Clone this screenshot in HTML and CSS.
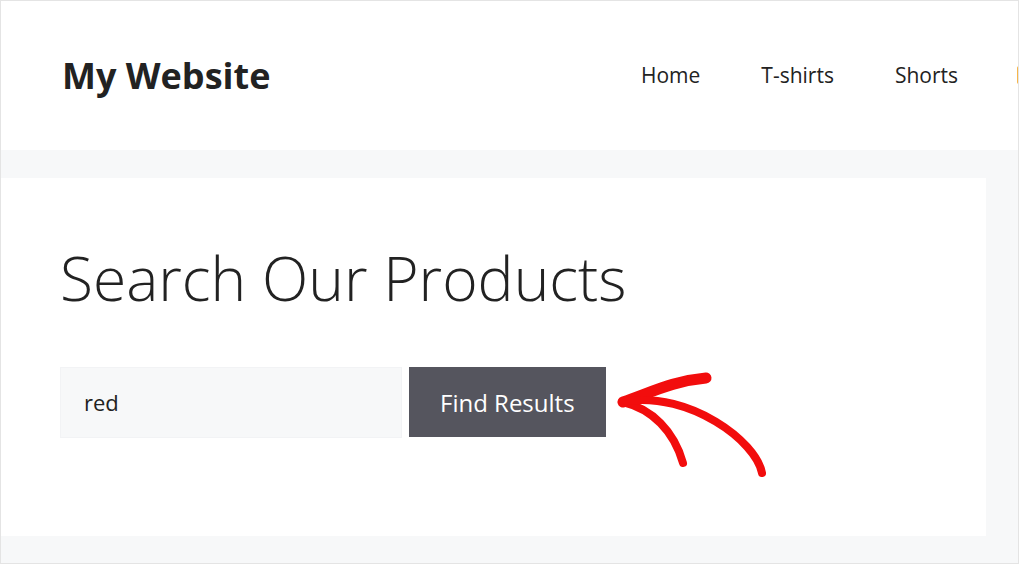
FILE: index.html
```html
<!DOCTYPE html>
<html lang="en">
<head>
<meta charset="utf-8">
<title>My Website</title>
<link rel="stylesheet" href="styles.css">
</head>
<body>
<div class="frame">
  <header class="site-header">
    <div class="logo">My Website</div>
    <nav class="nav">
      <a class="nav-link" href="#">Home</a>
      <a class="nav-link" href="#">T-shirts</a>
      <a class="nav-link" href="#">Shorts</a>
      <span class="nav-cart"></span>
    </nav>
  </header>
  <main class="main">
    <section class="card">
      <h1 class="title">Search Our Products</h1>
      <form class="search">
        <input class="search-input" type="text" value="red">
        <button class="search-btn" type="button">Find Results</button>
      </form>
      <svg class="arrow" width="170" height="120" viewBox="0 0 170 120">
        <g fill="none" stroke="#f20d0d" stroke-linecap="round" stroke-linejoin="round">
          <path d="M13 37 C 40 28, 62 16, 96 13" stroke-width="11"/>
          <path d="M13 37 C 42 44, 64 66, 73 98" stroke-width="8"/>
          <path d="M16 36 C 80 27, 146 76, 152 108" stroke-width="8"/>
        </g>
      </svg>
    </section>
  </main>
</div>
</body>
</html>
```

FILE: styles.css
```css
* { box-sizing: border-box; }
html, body { margin: 0; padding: 0; background: #ffffff; }
body { font-family: "Open Sans", "Noto Sans", Arial, sans-serif; color: #222222; }

.frame {
  width: 1019px;
  height: 564px;
  border: 1px solid #e4e4e4;
  background: #f7f8f9;
  overflow: hidden;
}

.site-header {
  height: 149px;
  background: #ffffff;
  display: flex;
  align-items: center;
  padding-left: 61px;
  white-space: nowrap;
}

.logo {
  width: 579px;
  flex: none;
  font-size: 36px;
  font-weight: 700;
  line-height: 1;
  color: #222222;
}

.nav {
  display: flex;
  align-items: center;
  gap: 61px;
  flex: none;
  padding-bottom: 1px;
}

.nav-link {
  font-size: 21px;
  line-height: 1;
  color: #222222;
  text-decoration: none;
}

.nav-cart {
  width: 18px;
  height: 18px;
  margin-left: -2px;
  background: #f7b64a;
  border-radius: 2px;
}

.main {
  padding-top: 28px;
}

.card {
  position: relative;
  width: 985px;
  height: 358px;
  background: #ffffff;
  padding: 70px 0 0 59px;
}

.title {
  margin: 0;
  font-size: 60.5px;
  font-weight: 300;
  line-height: 1;
  color: #222222;
}

.search {
  display: flex;
  gap: 7px;
  margin-top: 58px;
}

.search-input {
  width: 342px;
  height: 71px;
  border: 1px solid #f2f3f5;
  background: #f7f8f9;
  padding: 0 23px;
  font-family: inherit;
  font-size: 22px;
  color: #222222;
  outline: none;
}

.search-btn {
  height: 70px;
  padding: 2px 31px 0;
  border: 0;
  background: #55555e;
  color: #ffffff;
  font-family: inherit;
  font-size: 24px;
}

.arrow {
  position: absolute;
  left: 609px;
  top: 187px;
}
```
